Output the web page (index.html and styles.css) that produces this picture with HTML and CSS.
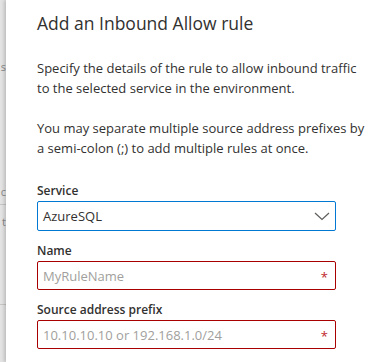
FILE: index.html
```html
<!DOCTYPE html>
<html lang="en">
<head>
    <meta charset="UTF-8">
    <meta name="viewport" content="width=device-width, initial-scale=1.0">
    <title>Add an Inbound Allow rule</title>
    <link rel="stylesheet" href="styles.css">
</head>
<body>
    <div class="page">
        <div class="backdrop">
            <span class="peek peek-s">s</span>
            <span class="peek peek-c">c</span>
            <span class="peek peek-t">t</span>
            <span class="peek-rule"></span>
        </div>

        <div class="panel">
            <h2>Add an Inbound Allow rule</h2>
            <p>Specify the details of the rule to allow inbound traffic<br>to the selected service in the environment.</p>
            <p>You may separate multiple source address prefixes by<br>a semi-colon (;) to add multiple rules at once.</p>

            <form class="rule-form">
                <div class="form-group">
                    <label for="service">Service</label>
                    <div class="field field-select" id="service">
                        <span class="value">AzureSQL</span>
                        <svg class="chevron" width="16" height="9" viewBox="0 0 16 9">
                            <path d="M1 1 L8 7.5 L15 1" fill="none" stroke="#605e5c" stroke-width="1.2"/>
                        </svg>
                    </div>
                </div>
                <div class="form-group">
                    <label for="name">Name</label>
                    <div class="field field-error">
                        <input type="text" id="name" placeholder="MyRuleName">
                        <span class="required">*</span>
                    </div>
                </div>
                <div class="form-group">
                    <label for="prefix">Source address prefix</label>
                    <div class="field field-error">
                        <input type="text" id="prefix" placeholder="10.10.10.10 or 192.168.1.0/24">
                        <span class="required">*</span>
                    </div>
                </div>
            </form>
        </div>
    </div>
</body>
</html>
```

FILE: styles.css
```css
body {
    margin: 0;
    padding: 0;
    font-family: "Open Sans", "Noto Sans", Arial, sans-serif;
    color: #323130;
    background: #ffffff;
}
.page {
    display: flex;
    width: 384px;
    height: 362px;
    overflow: hidden;
}
.backdrop {
    width: 6px;
    flex-shrink: 0;
    background: #e3e3e3;
    display: flex;
    flex-direction: column;
    color: #8a8886;
    font-size: 11px;
    line-height: 14px;
}
.peek {
    display: flex;
    justify-content: flex-end;
    width: 6px;
}
.peek-s {
    margin-top: 60px;
}
.peek-c {
    margin-top: 111px;
    padding-bottom: 5px;
    border-bottom: 1px solid #c8c6c4;
}
.peek-t {
    margin-top: 10px;
}
.peek-rule {
    margin-top: 75px;
    border-top: 1px solid #c8c6c4;
}
.panel {
    flex: 1;
    padding: 11px 0 0 31px;
    box-shadow: -2px 0 3px rgba(0, 0, 0, 0.16);
    background: #ffffff;
    position: relative;
}
.panel h2 {
    margin: 0 0 23px;
    font-size: 17.5px;
    font-weight: 400;
    line-height: 24px;
    color: #323130;
}
.panel p {
    margin: 0 0 20px;
    font-size: 13px;
    line-height: 20px;
    white-space: nowrap;
}
.panel p:last-of-type {
    margin-bottom: 0;
}
.rule-form {
    margin-top: 24px;
    width: 299px;
}
.form-group {
    margin-bottom: 11px;
}
.form-group label {
    display: block;
    font-size: 12px;
    font-weight: 600;
    line-height: 18px;
    margin-bottom: 1px;
    color: #323130;
}
.field {
    display: flex;
    align-items: center;
    height: 30px;
    box-sizing: border-box;
    border: 1px solid #8a8886;
    border-radius: 2px;
    padding: 0 5px 0 5px;
}
.field-select {
    border-color: #0078d4;
    justify-content: space-between;
    font-size: 13px;
}
.field-select .chevron {
    margin-right: 0;
}
.field-error {
    border-color: #a80000;
    height: 29px;
}
.field input {
    flex: 1;
    min-width: 0;
    border: none;
    outline: none;
    padding: 0;
    font-family: inherit;
    font-size: 13px;
    color: #323130;
    background: transparent;
}
.field input::placeholder {
    color: #a19f9d;
}
.required {
    color: #c0282e;
    font-size: 13px;
    line-height: 1;
    margin-right: 2px;
    margin-top: 3px;
}
```
